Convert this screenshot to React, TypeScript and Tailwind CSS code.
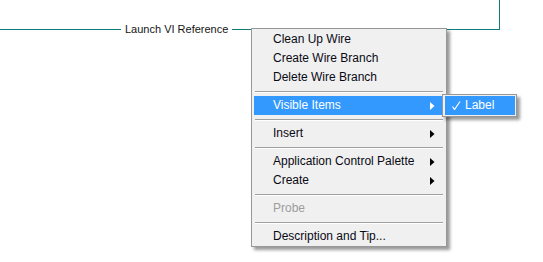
import { ReactElement } from "react";

type Item =
  | { kind: "item"; label: string; sub?: boolean; active?: boolean; disabled?: boolean }
  | { kind: "sep" };

const items: Item[] = [
  { kind: "item", label: "Clean Up Wire" },
  { kind: "item", label: "Create Wire Branch" },
  { kind: "item", label: "Delete Wire Branch" },
  { kind: "sep" },
  { kind: "item", label: "Visible Items", sub: true, active: true },
  { kind: "sep" },
  { kind: "item", label: "Insert", sub: true },
  { kind: "sep" },
  { kind: "item", label: "Application Control Palette", sub: true },
  { kind: "item", label: "Create", sub: true },
  { kind: "sep" },
  { kind: "item", label: "Probe", disabled: true },
  { kind: "sep" },
  { kind: "item", label: "Description and Tip..." },
];

function Arrow({ color }: { color: string }) {
  return (
    <svg width="5" height="8" viewBox="0 0 5 8">
      <path d="M0 0 L4.5 4 L0 8 Z" fill={color} />
    </svg>
  );
}

function MenuRow({ item }: { item: Item }): ReactElement {
  if (item.kind === "sep") {
    return (
      <div className="h-[9px] pt-[4px]">
        <div className="ml-[1px] border-t border-[#a0a0a0] border-b border-b-white" />
      </div>
    );
  }
  const tone = item.active
    ? "bg-[#3399ff] text-white"
    : item.disabled
      ? "text-[#9d9d9d]"
      : "text-[#0a0a14]";
  return (
    <div className={`flex h-[19px] items-center justify-between pl-[19px] pr-[8px] ${tone}`}>
      <span className="leading-[19px]">{item.label}</span>
      {item.sub && <Arrow color={item.active ? "#ffffff" : "#000000"} />}
    </div>
  );
}

export default function App() {
  return (
    <div
      className="relative h-[262px] w-[543px] overflow-hidden bg-white"
      style={{ fontFamily: '"Liberation Sans", Arial, sans-serif' }}
    >
      {/* wire on the block diagram */}
      <div className="flex h-[30px] items-end">
        <div className="h-px w-[121px] bg-[#0e7c7b]" />
        <span className="mb-[-7px] ml-[4px] mr-[4px] text-[11px] leading-[15px] text-[#141414]">
          Launch VI Reference
        </span>
        <div className="h-[30px] w-[268px] border-b border-r border-[#0e7c7b]" />
      </div>

      {/* context menu */}
      <div className="absolute left-[251px] top-[28px] w-[196px] border border-[#979797] bg-[#f0f0f0] pl-[2px] pr-[3px] pt-[1px] text-[12px] shadow-[3px_3px_3px_rgba(0,0,0,0.4)]">
        {items.map((it, i) => (
          <MenuRow key={i} item={it} />
        ))}
      </div>

      {/* submenu */}
      <div className="absolute left-[442px] top-[94px] w-[75px] border border-[#979797] bg-[#f0f0f0] py-[1px] pl-[2px] pr-[1px] text-[12px] shadow-[3px_3px_3px_rgba(0,0,0,0.4)]">
        <div className="flex h-[19px] items-center bg-[#3399ff] pl-[7px] text-white">
          <svg width="9" height="9" viewBox="0 0 9 9" className="mr-[4px]">
            <path d="M0.5 5.5 L2.5 8.5 L8 0.5" stroke="#ffffff" strokeWidth="1.2" fill="none" />
          </svg>
          <span className="leading-[19px]">Label</span>
        </div>
      </div>
    </div>
  );
}
